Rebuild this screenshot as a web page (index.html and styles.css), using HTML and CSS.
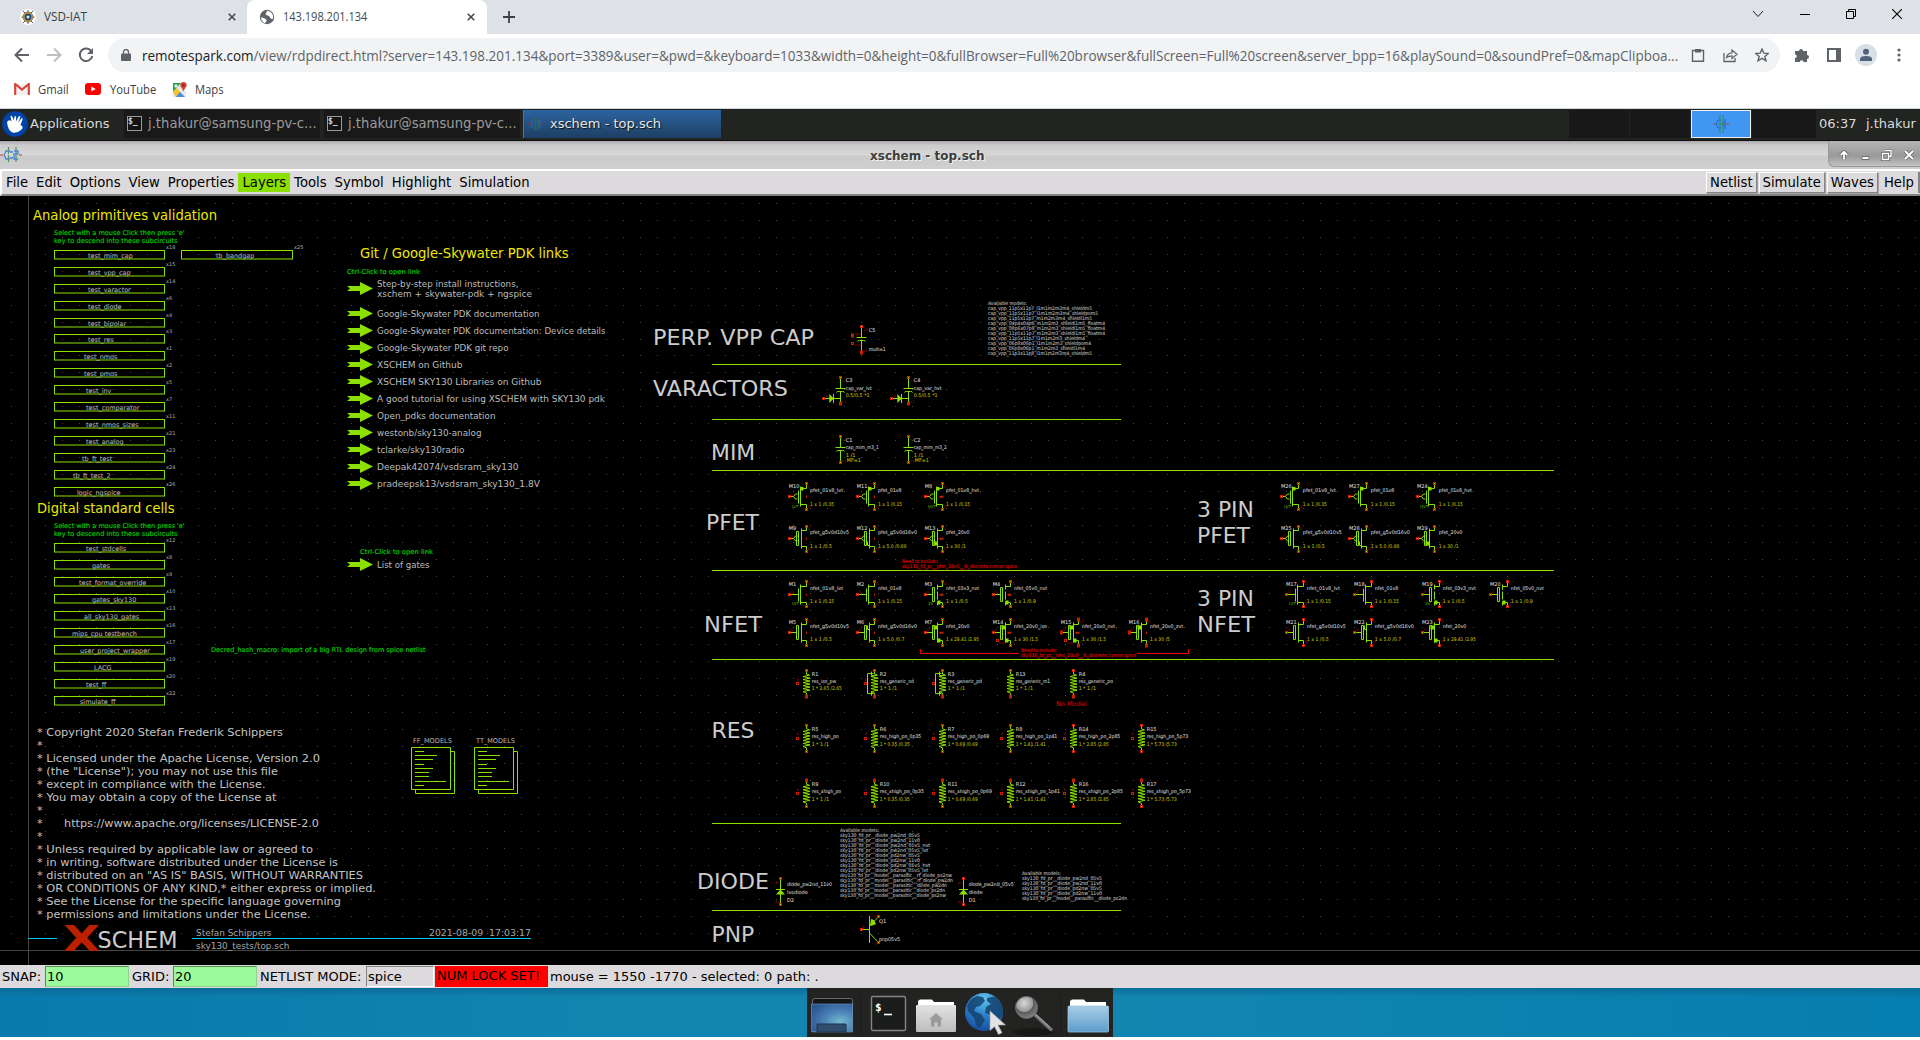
FILE: index.html
```html
<!DOCTYPE html>
<html lang="en">
<head>
<meta charset="utf-8">
<title>143.198.201.134</title>
<link rel="stylesheet" href="styles.css">
</head>
<body>
<header class="browser">
  <div class="tabstrip">
    <div class="tab">
      <svg class="fav" width="16" height="18" viewBox="0 0 16 18"><ellipse cx="8" cy="9" rx="8" ry="8" fill="#fff"/><path d="M3 3l3 3M13 3l-3 3M3 15l3-3M13 15l-3-3M1.500 9h3M11.500 9h3M8 2v3M8 13v3" stroke="#555"/><circle cx="8" cy="9" r="5" fill="#e39a2d" stroke="#666" stroke-width=".8"/><circle cx="8" cy="9" r="3.400" fill="#1b4e6b"/><circle cx="8" cy="9" r="1.500" fill="#d8e7ee"/></svg>
      <span class="tablabel"><span data-w="43">VSD-IAT</span></span>
      <svg class="x" width="8" height="8" viewBox="0 0 8 8"><path d="M.7.7l6.600 6.600M7.300.7L.7 7.300" stroke="#45494d" stroke-width="1.600"/></svg>
    </div>
    <div class="tab active">
      <svg class="fav" width="16" height="16" viewBox="0 0 16 16"><circle cx="8" cy="8" r="7.200" fill="#5f6368"/><path d="M2 8.500c2 0 3.500.6 5 2 1.200 1 .6 2-.4 2.400l-.3 1.300C3.500 13.400 2 11 2 8.500zM8 1.800c-.6 1.300-.2 2.300-1.400 2.800 0 1.200.6 1.700 2.200 2 1.800.4 2 2 3 3 .6.600 1.400.6 2.200-.2C14.800 5.500 12 2.200 8 1.800z" fill="#fff"/></svg>
      <span class="tablabel"><span data-w="84.500">143.198.201.134</span></span>
      <svg class="x" width="8" height="8" viewBox="0 0 8 8"><path d="M.7.7l6.600 6.600M7.300.7L.7 7.300" stroke="#45494d" stroke-width="1.600"/></svg>
    </div>
    <svg class="plus" width="12" height="12" viewBox="0 0 12 12"><path d="M6 0v12M0 6h12" stroke="#3c4043" stroke-width="1.800"/></svg>
    <div class="winbtns">
      <svg width="12" height="8" viewBox="0 0 12 8"><path d="M1 1l5 5.500L11 1" fill="none" stroke="#222"/></svg>
      <svg width="10" height="10" viewBox="0 0 10 10"><path d="M0 5.500h10" stroke="#000"/></svg>
      <svg width="10" height="10" viewBox="0 0 10 10"><path d="M.5 2.500h7v7h-7zM2.500 2.500v-2h7v7h-2" fill="none" stroke="#000"/></svg>
      <svg width="10" height="10" viewBox="0 0 10 10"><path d="M0 0l10 10M10 0L0 10" stroke="#000" stroke-width="1.100"/></svg>
    </div>
  </div>
  <div class="toolbar">
    <div class="nav">
      <svg width="16" height="16" viewBox="0 0 16 16"><path d="M15 8H2M8 1.500L1.500 8 8 14.500" fill="none" stroke="#5f6368" stroke-width="2"/></svg>
      <svg width="16" height="16" viewBox="0 0 16 16"><path d="M1 8h13M8 1.500L14.500 8 8 14.500" fill="none" stroke="#bcbec0" stroke-width="2"/></svg>
      <svg width="16" height="16" viewBox="0 0 16 16"><path d="M13.500 4.500A6.300 6.300 0 1 0 14.300 9" fill="none" stroke="#5f6368" stroke-width="2"/><path d="M15 1v6H9z" fill="#5f6368"/></svg>
    </div>
    <div class="omnibox">
      <svg width="10" height="12" viewBox="0 0 10 12"><path d="M1 4.500h8q1 0 1 1V11q0 1-1 1H1q-1 0-1-1V5.500q0-1 1-1z" fill="#5f6368"/><path d="M2.500 5V3a2.500 2.500 0 0 1 5 0v2" fill="none" stroke="#5f6368" stroke-width="1.300"/></svg>
      <span class="url"><span data-w="1536"><b>remotespark.com</b>/view/rdpdirect.html?server=143.198.201.134&amp;port=3389&amp;user=&amp;pwd=&amp;keyboard=1033&amp;width=0&amp;height=0&amp;fullBrowser=Full%20browser&amp;fullScreen=Full%20screen&amp;server_bpp=16&amp;playSound=0&amp;soundPref=0&amp;mapClipboa...</span></span>
      <svg width="14" height="14" viewBox="0 0 14 14"><path d="M1.500 2.500h11v10.800h-11z" fill="none" stroke="#5f6368" stroke-width="1.400"/><path d="M4 1h6v3.500H4z" fill="#5f6368"/></svg>
      <svg width="16" height="15" viewBox="0 0 16 15"><path d="M2 5v8.500h11V10" fill="none" stroke="#5f6368" stroke-width="1.300"/><path d="M4.500 9.500c.5-3 2.500-4.500 5.500-4.700V2l5 4.300-5 4.200V7.800c-2.500 0-4 .5-5.500 1.700z" fill="none" stroke="#5f6368" stroke-width="1.200"/></svg>
      <svg width="14" height="14" viewBox="0 0 14 14"><path d="M7 1l1.800 4.200 4.500.3-3.500 2.900 1.200 4.400L7 10.400l-4 2.400 1.200-4.400L.7 5.500l4.500-.3z" fill="none" stroke="#5f6368" stroke-width="1.400"/></svg>
    </div>
    <div class="ext">
      <svg width="16" height="16" viewBox="0 0 16 16"><path d="M1 4h4a2 2 0 1 1 4 0h4v4a2 2 0 1 1 0 4v3H9.500a1.800 1.800 0 0 0-3.600 0H1v-4a1.800 1.800 0 0 0 0-3.600z" fill="#5f6368"/></svg>
      <svg width="14" height="14" viewBox="0 0 14 14"><path d="M1 1h12v12H1z" fill="none" stroke="#5f6368" stroke-width="2"/><path d="M9 1h4v12H9z" fill="#5f6368"/></svg>
      <svg class="avatar" width="22" height="22" viewBox="0 0 22 22"><circle cx="11" cy="11" r="11" fill="#d9dfe6"/><circle cx="11" cy="7.800" r="3" fill="#51617a"/><path d="M5 17v-2q0-3 6-3t6 3v2z" fill="#51617a"/></svg>
      <svg width="4" height="14" viewBox="0 0 4 14"><g fill="#5f6368"><circle cx="2" cy="2" r="1.600"/><circle cx="2" cy="7" r="1.600"/><circle cx="2" cy="12" r="1.600"/></g></svg>
    </div>
  </div>
  <div class="bookmarks">
    <span class="bm gmail"><svg width="16" height="12" viewBox="0 0 16 12"><path d="M2.500 1h11v11h-11z" fill="#f1f1f1"/><path d="M1.200 12V1L8 6.500 14.800 1v11" fill="none" stroke="#d8443a" stroke-width="2.200"/></svg><span data-w="31">Gmail</span></span>
    <span class="bm yt"><svg width="16" height="12" viewBox="0 0 16 12"><rect width="16" height="12" rx="3" fill="#f00"/><path d="M6.300 3.500v5L10.700 6z" fill="#fff"/></svg><span data-w="46">YouTube</span></span>
    <span class="bm"><svg width="15" height="15" viewBox="0 0 15 15"><path d="M1 1h9v6l4 2v6H1z" fill="#e8e8e8"/><path d="M1 1h8L1 10z" fill="#2ba24c"/><path d="M1 10l4-4 7 9H4z" fill="#f6c52c"/><path d="M4 15l4-5 5 5z" fill="#4a8af4"/><circle cx="4" cy="4" r="1.700" fill="#d9f0df"/><path d="M11.500 0a3.200 3.200 0 0 1 3.200 3.200c0 2-2.200 3-3.200 6.300-1-3.300-3.200-4.300-3.200-6.300A3.200 3.200 0 0 1 11.500 0z" fill="#db4437"/><circle cx="11.500" cy="3.200" r="1.200" fill="#7b241d"/></svg><span data-w="29">Maps</span></span>
  </div>
</header>

<nav class="panel">
  <div class="apps">
    <svg width="26" height="26" viewBox="0 0 26 26"><circle cx="13" cy="13" r="12.800" fill="#0044aa"/><path d="M5 11q2-3 4.500-.5L8.500 5q2-1 3 4.500L12.800 5l1.400.5-.3 5L17 5l1.500.6-2.300 6.400 3.300-5 1.300.7L18.500 14q4 2 .5 5-4 3.500-8.500 2.500Q6 20 5 11z" fill="#fff"/></svg>
    <span>Applications</span>
  </div>
  <div class="task"><i class="term">$_</i><span>j.thakur@samsung-pv-c...</span></div>
  <div class="task"><i class="term">$_</i><span>j.thakur@samsung-pv-c...</span></div>
  <div class="task on"><svg width="16" height="16" viewBox="0 0 16 16"><path d="M0 8h3m10 0h3" stroke="#933"/><path d="M4 4v8M12 4v8" stroke="#2a63c5"/><path d="M7 2v12M10 2v12" stroke="#2c7a4a"/></svg><span>xschem - top.sch</span></div>
  <div class="workspaces"><i></i><i></i><i class="cur"><svg width="16" height="18" viewBox="0 0 16 18"><path d="M0 9h3m10 0h3" stroke="#a44"/><path d="M3 9l2-4h3m-5 4l2 4h3M12 4v4h-2m2 6v-4h-2" fill="none" stroke="#2461c9"/><path d="M7 0v18M10 0v18M5 9h8" stroke="#2f8a68"/></svg></i><i class="last"></i></div>
  <span class="clock">06:37</span><span class="user">j.thakur</span>
</nav>

<div class="titlebar">
  <svg class="appicon" width="22" height="16" viewBox="0 0 22 16"><path d="M0 8h3m16 0h3" stroke="#c33"/><path d="M4 8l2-4h4m-6 4l2 4h4M14 4h4v3h-4v5h4M10 5h3M10 11h3" fill="none" stroke="#4a7fe0" stroke-width="1.300"/><path d="M8.500 0v16M16 0v16" stroke="#48964a" stroke-width="1.200" stroke-dasharray="3 1"/></svg>
  <span class="wintitle"><span data-w="114">xschem - top.sch</span></span>
  <div class="wmbtns">
    <svg width="10" height="10" viewBox="0 0 10 10"><path d="M5 1.500v8M1.500 5L5 1.500 8.500 5" fill="none" stroke="#666" stroke-width="3.400"/><path d="M5 1.500v8M1.800 5L5 1.800 8.200 5" fill="none" stroke="#fff" stroke-width="1.800"/></svg>
    <svg width="9" height="10" viewBox="0 0 9 10"><path d="M1 6.500h7v3H1z" fill="#fff" stroke="#707070"/></svg>
    <svg width="11" height="12" viewBox="0 0 11 12"><path d="M4 1.500h6v6H8M1.500 4.500h6v6h-6z" fill="none" stroke="#666" stroke-width="3"/><path d="M4 1.500h6v6H8M1.500 4.500h6v6h-6z" fill="none" stroke="#fff" stroke-width="1.400"/></svg>
    <svg width="10" height="10" viewBox="0 0 10 10"><path d="M1 1l8 8M9 1L1 9" stroke="#666" stroke-width="3.600"/><path d="M1 1l8 8M9 1L1 9" stroke="#fff" stroke-width="2"/></svg>
  </div>
</div>

<div class="menubar">
  <span>File</span><span>Edit</span><span>Options</span><span>View</span><span>Properties</span><span class="hot">Layers</span><span>Tools</span><span>Symbol</span><span>Highlight</span><span>Simulation</span>
  <div class="menuright"><span class="raised">Netlist</span><span class="raised">Simulate</span><span class="raised">Waves</span><span>Help</span></div>
</div>

<svg id="schematic" class="schematic" width="1920" height="769" viewBox="0 196 1920 769"></svg>

<div class="status">
  <span>SNAP:</span><span class="entry green">10</span><span>GRID:</span><span class="entry green second">20</span><span>NETLIST MODE:</span><span class="entry">spice</span><span class="alarm">NUM LOCK SET!</span><span class="mouse">mouse = 1550 -1770 - selected: 0 path: .</span>
</div>

<footer class="desktop">
  <div class="dock">
    <svg width="306" height="49" viewBox="807 988 306 49">
      <defs>
        <radialGradient id="scr" cx=".7" cy=".65" r=".8"><stop offset="0" stop-color="#74bccc"/><stop offset=".5" stop-color="#4a80b6"/><stop offset="1" stop-color="#2d5690"/></radialGradient>
        <linearGradient id="grey" x2="0" y2="1"><stop offset="0" stop-color="#e2e2e2"/><stop offset="1" stop-color="#bdbdbd"/></linearGradient>
        <linearGradient id="blue" x2="0" y2="1"><stop offset="0" stop-color="#a9cde6"/><stop offset="1" stop-color="#5c9dcb"/></linearGradient>
        <radialGradient id="sea" cx=".5" cy=".15" r=".9"><stop offset="0" stop-color="#5fc5ee"/><stop offset=".5" stop-color="#2b7fcb"/><stop offset="1" stop-color="#12489e"/></radialGradient>
        <radialGradient id="lens" cx=".4" cy=".3" r=".7"><stop offset="0" stop-color="#d8d8d8"/><stop offset=".55" stop-color="#999"/><stop offset=".6" stop-color="#5c5c5c"/><stop offset="1" stop-color="#808080"/></radialGradient>
      </defs>
      <path d="M812.500 1032v-31q0-2.500 2-2.500h36q2 0 2 2.500v31z" fill="#141516" stroke="#67696a"/>
      <path d="M811.500 1004h41v27.500h-41z" fill="url(#scr)" stroke="#6d9fd0" stroke-opacity=".6"/>
      <path d="M817 1032v-8h29v8z" fill="#304e6c" stroke="#1c3550"/>
      <path d="M860.500 995v38M1060.500 995v38" stroke="#191a19"/>
      <rect x="871.500" y="996.500" width="34" height="34" rx="1.500" fill="#1b1d1c" stroke="#858585" stroke-width="1.400"/>
      <text x="875" y="1011" class="prompt">$</text><path d="M884 1014.500h8" stroke="#fff" stroke-width="1.600"/>
      <path d="M918 1009v-8l2-1.500h12l2 2.500h20v7z" fill="#fff"/><rect x="916" y="1005" width="40" height="27" rx="1" fill="url(#grey)"/>
      <path d="M936 1013l7 6.500h-2v7h-3.500v-4h-3v4H931v-7h-2z" fill="#9b9b9b"/>
      <circle cx="984" cy="1012" r="19" fill="url(#sea)"/>
      <path d="M967 1006q3-8 10-10l6 1 2 4-5 5-4 1-2 4 7 3 4 6-5 8-3-1-3-9-6-7zM987 998l9-2 6 9 1 9-5 8-5-1-2-6-6-2 1-6 5-3-4-3z" fill="#15436f" opacity=".85"/>
      <path d="M990 1011v19.500l4.500-4 4 8 3.500-1.800-4-7.700h7.500z" fill="#e2e2e2" stroke="#aaa" stroke-width=".6"/>
      <ellipse cx="1034" cy="1032" rx="20" ry="4" fill="#111" opacity=".6"/>
      <path d="M1034 1014l17 15.500" stroke="#737373" stroke-width="3.400" stroke-linecap="round"/><path d="M1035 1014l15 13.500" stroke="#b5b5b5" stroke-width="1"/>
      <circle cx="1026.500" cy="1007.500" r="11" fill="url(#lens)" stroke="#6c6c6c"/>
      <path d="M1070 1008v-7l2-1.500h12l2 2.500h20v7z" fill="#fff"/><rect x="1068" y="1006" width="40.500" height="26" rx="1" fill="url(#blue)" stroke="#9cc3de" stroke-width=".8"/>
    </svg>
  </div>
</footer>
<script src="app.js"></script>
</body>
</html>
```
FILE: styles.css
```css
* { box-sizing: border-box; }
body { margin: 0; width: 1920px; height: 1040px; overflow: hidden; background: #fff; font-family: "DejaVu Sans", sans-serif; font-size: 13px; }
svg { display: block; flex: none; }
[data-w] { display: inline-block; white-space: nowrap; transform-origin: 0 50%; }

.browser { height: 109px; font-family: "Open Sans", "Noto Sans", sans-serif; font-size: 12px; color: #3c4043; border-bottom: 1px solid #cfd6d9; }
.tabstrip { height: 34px; background: #dee1e6; display: flex; align-items: center; position: relative; }
.tab { width: 247px; height: 34px; display: flex; align-items: center; padding: 0 11px 0 20px; }
.tab.active { width: 240px; background: #fff; border-radius: 8px 8px 0 0; padding: 0 12px 0 12px; color: #45494d; }
.tablabel { margin-left: 8px; flex: 1; overflow: hidden; padding-bottom: 1px; }
.plus { margin-left: 16px; }
.winbtns { margin-left: auto; display: flex; align-items: center; gap: 36px; padding: 0 18px 6px 0; }
.toolbar { height: 42px; display: flex; align-items: center; }
.nav { width: 108px; display: flex; gap: 16px; padding-left: 14px; }
.omnibox { width: 1672px; height: 34px; border-radius: 17px; background: #f1f3f4; display: flex; align-items: center; padding: 0 11px 0 13px; font-size: 14px; color: #5f6368; }
.url { width: 1550px; margin-left: 11px; overflow: hidden; flex: none; margin-right: -1px; }
.url b { font-weight: 400; color: #202124; }
.omnibox svg + svg { margin-left: 17px; }
.ext { display: flex; align-items: center; gap: 17px; padding-left: 14px; }
.avatar { margin: 0 3px 0 -3px; }
.bookmarks { height: 26px; display: flex; align-items: center; padding-left: 14px; gap: 16px; }
.bm { display: flex; align-items: center; gap: 8px; }
.bm.yt { gap: 9px; }

.panel { height: 32px; background: #222421; border-bottom: 1px solid #0e0e0e; display: flex; align-items: center; color: #dadada; padding-bottom: 2px; }
.apps { width: 124px; display: flex; align-items: center; gap: 2px; padding-left: 2px; }
.task { width: 196px; height: 28px; margin-right: 4px; background: #191919; display: flex; align-items: center; gap: 6px; padding-left: 3px; color: #9b9b9b; white-space: nowrap; font-size: 13.200px; }
.task:nth-child(3) { margin-right: 3px; }
.task.on { width: 198px; background: linear-gradient(#2b64a0, #1e3f63); color: #e6e6e6; padding-left: 4px; text-shadow: 1px 1px 1px #111; border-left: 1px solid #3b7bbd; font-size: 13px; }
.term { width: 15px; height: 15px; border: 1px solid #9a9a9a; background: #141414; color: #ddd; font: bold 8px/9px "DejaVu Sans Mono", monospace; }
.workspaces { margin-left: auto; display: flex; gap: 1px; height: 28px; }
.workspaces i { width: 60px; background: #181818; }
.workspaces .last { width: 64px; }
.workspaces .cur { background: #4096f0; border: 1px solid #f2f2f2; display: flex; align-items: center; justify-content: center; }
.clock { width: 46px; padding-left: 3px; }
.user { width: 54px; margin-left: 4px; white-space: nowrap; }

.titlebar { height: 28px; background: linear-gradient(#aaa8aa 0, #cccacc 4px, #d8d8d8 14px, #cbcbcb 15px, #cfcfcf); display: flex; align-items: center; }
.appicon { margin-top: 0; }
.wintitle { margin-left: 848px; padding-top: 1px; flex: 1; font-weight: 700; font-size: 12px; color: #3b3d3e; text-shadow: 1px 1px 0 #f5f5f5; }
.wmbtns { width: 92px; height: 26px; margin-bottom: 2px; display: flex; align-items: center; justify-content: space-between; padding: 2px 6px 0 10px; border-radius: 0 0 0 6px; border: 1px solid #999; border-width: 0 0 1px 1px; background: linear-gradient(#b5b5b5, #999 60%, #c4c4c4); }
.menubar { height: 27px; background: #dcdadd; border-top: 2px solid #fff; border-left: 2px solid #fff; border-bottom: 2px solid #848284; display: flex; align-items: center; color: #000; font-size: 13.200px; }
.menubar span { padding: 0 4px; height: 19px; line-height: 19px; white-space: nowrap; }
.menubar .hot { background: #8be000; }
.menuright { margin-left: auto; display: flex; align-items: center; gap: 2px; padding-right: 0; border-right: 2px solid #848284; }
.menuright .raised { height: 21px; border: 1px solid; border-color: #fff #848284 #848284 #fff; box-shadow: 1px 1px #a5a3a5; padding: 0 3px; line-height: 20px; }

.schematic { background: #000; font-family: "DejaVu Sans", sans-serif; }
.schematic text { white-space: pre; fill: #bcbcbc; font-size: 8.650px; }
.schematic .h { font-size: 13.400px; fill: #eee800; }
.schematic .lic { font-size: 11.200px; fill: #c4c4c4; }
.schematic .big { font-size: 21.900px; fill: #ccc; }
.schematic .info { font-size: 8.850px; fill: #a6a6a6; }
.schematic .g { font-size: 6.500px; fill: #00cc00; stroke: #00cc00; stroke-width: .15px; }
.schematic .lab { font-size: 6.470px; fill: #a8a8a8; stroke: #a8a8a8; stroke-width: .12px; }
.schematic .mod { font-size: 6.600px; fill: #b8b8b8; }
.schematic .tiny { font-size: 5px; fill: #b0b0b0; }
.schematic .c { font-size: 5px; fill: #c4c4c4; stroke: #c4c4c4; stroke-width: .1px; }
.schematic .s { font-size: 5px; fill: #b0b000; stroke: #b0b000; stroke-width: .1px; }
.schematic .m { font-size: 4.900px; fill: #b0b0b0; stroke: #b0b0b0; stroke-width: .12px; }
.schematic .r { font-size: 5px; fill: #e80000; stroke: #e80000; stroke-width: .12px; }
.schematic .nm { font-size: 6.400px; fill: #e80000; }
.schematic .p { font-size: 3.400px; fill: #b80000; }
.schematic .v { font-size: 4px; fill: #5cb800; }
.schematic .logo { font-size: 35.600px; font-weight: 700; fill: #bd2000; }
.schematic .name { font-size: 22.300px; fill: #ccc; }
.schematic .w { fill: none; stroke: #8be000; stroke-width: 1; }
.schematic .f { fill: #8be000; }
.schematic .pin { fill: #8be000; stroke: #d01c00; stroke-width: 1; }
.schematic .pin.o { fill: #000; }
.schematic .pf { fill: #c42000; }
.schematic .axis { stroke: #444; fill: none; }
.schematic .dots { stroke: #484848; fill: none; stroke-dasharray: 1 16; }
.schematic .cy { stroke: #00c8f0; fill: none; }
.schematic .red { stroke: #f00000; fill: none; }

.status { height: 23px; background: #dcdadd; display: flex; align-items: center; color: #000; white-space: nowrap; padding-left: 2px; }
.status span { flex: none; }
.status span:nth-child(1) { width: 43px; }
.status span:nth-child(3) { width: 41px; }
.status span:nth-child(5) { width: 106px; }
.status .entry { width: 68px; height: 21px; line-height: 19px; border: 1px solid; border-color: #848284 #fff #fff #848284; padding-left: 1px; }
.status .green { width: 84px; background: #9bfb9b; border-color: #548a54 #8bd58b #8bd58b #548a54; margin-right: 3px; }
.status .alarm { width: 113px; height: 21px; line-height: 20px; background: #f00; padding-left: 2px; margin-left: 1px; }
.status .mouse { margin-left: 2px; }
.desktop { height: 49px; background: linear-gradient(#0a6c99, transparent 9px), linear-gradient(90deg, #087aac, #1184b0 30%, #1286b1 60%, #057dae); display: flex; }
.dock { width: 306px; margin-left: 807px; background: #232422; }
.prompt { font: bold 11px "DejaVu Sans Mono", monospace; fill: #fff; }
```
FILE: app.js
```js
// Squeeze or stretch labels to the width of their slot.
document.querySelectorAll('[data-w]').forEach(function (el) {
  var want = +el.dataset.w, have = el.offsetWidth;
  el.style.transform = 'scaleX(' + want / have + ')';
  el.style.marginRight = (want - have) + 'px';
});

var NS = 'http://www.w3.org/2000/svg';
var svg = document.getElementById('schematic');
function add(tag, attrs, text) {
  var e = document.createElementNS(NS, tag);
  for (var k in attrs) e.setAttribute(k, attrs[k]);
  if (text != null) e.textContent = text;
  svg.appendChild(e);
  return e;
}
function T(x, y, s, cls, len) {
  var a = { x: x, y: y };
  if (cls) a['class'] = cls;
  if (len) { a.textLength = len; a.lengthAdjust = 'spacingAndGlyphs'; }
  add('text', a, s);
}
function P(d, cls) { add('path', { d: d, 'class': cls || 'w' }); }
function px(v) { return Math.floor(v) + 0.5; }
function pin(x, y, kind) {
  x = px(x); y = px(y);
  if (kind === 'f') P('M' + (x - 1.5) + ' ' + (y - 2) + 'h3v4h-3z', 'pf');
  else add('rect', { x: x - 1, y: y - 1, width: 2, height: 2, 'class': kind === 'o' ? 'pin o' : 'pin' });
}
function lines(x, y, step, arr, cls, lens) { arr.forEach(function (s, i) { T(x, y + i * step, s, cls, lens && lens[i]); }); }

// grid and axes
var d = '';
for (var k = 1; k < 45; k++) d += 'M11 ' + px(950.3 - 16.98 * k) + 'H1920';
P(d, 'dots');
P('M28.5 196V965M0 950.5H1920', 'axis');

// sub-circuit boxes
function box(x, w, y, name, tx, inst) {
  add('rect', { x: x + .5, y: y + .5, width: w, height: 8.5, 'class': 'w' });
  T(tx, y + 8, name, 'lab');
  T(x + w + 2, y - 1, inst, 'tiny');
}
T(33, 220, 'Analog primitives validation', 'h', 184);
lines(54, 234.5, 8, ["Select with a mouse Click then press 'e'", 'key to descend into these subcircuits'], 'g', [130.6, 123.5]);
[['test_mim_cap', 88, 'x18'], ['test_vpp_cap', 88, 'x15'], ['test_varactor', 88, 'x14'], ['test_diode', 88, 'x6'], ['test_bipolar', 88, 'x4'],
 ['test_res', 88, 'x3'], ['test_nmos', 84, 'x1'], ['test_pmos', 84, 'x2'], ['test_inv', 86, 'x5'], ['test_comparator', 86, 'x7'],
 ['test_nmos_sizes', 86, 'x11'], ['test_analog', 86, 'x21'], ['tb_ft_test', 82, 'x23'], ['tb_ft_test_2', 73, 'x24'], ['logic_ngspice', 77, 'x26']
].forEach(function (b, i) { box(54, 110, Math.floor(250.2 + i * 16.95), b[0], b[1], b[2]); });
box(181, 111, 250, 'tb_bandgap', 216, 'x25');
T(37, 513, 'Digital standard cells', 'h', 137.5);
lines(54, 527.6, 8, ["Select with a mouse Click then press 'e'", 'key to descend into these subcircuits'], 'g', [130.6, 123.5]);
[['test_stdcells', 86, 'x12'], ['gates', 92, 'x8'], ['test_format_override', 79, 'x9'], ['gates_sky130', 92, 'x10'], ['all_sky130_gates', 84, 'x13'],
 ['mips_cpu testbench', 72, 'x16'], ['user_project_wrapper', 80, 'x17'], ['LACG', 94, 'x19'], ['test_ff', 86, 'x20'], ['simulate_ff', 80, 'x22']
].forEach(function (b, i) { box(54, 110, 543 + i * 17, b[0], b[1], b[2]); });
T(211, 652, 'Decred_hash_macro: import of a big RTL design from spice netlist', 'g', 214.7);

// links
function arrow(y) { y = px(y); P('M347 ' + (y - 2.5) + 'h13v-4l13 6.500-13 6.500v-4h-13l3-2.500z', 'f'); }
T(360, 258, 'Git / Google-Skywater PDK links', 'h', 208.6);
T(347, 273.5, 'Ctrl-Click to open link', 'g', 73);
arrow(288.3);
T(377, 287, 'Step-by-step install instructions,', '', 141.5);
T(377, 297, 'xschem + skywater-pdk + ngspice', '', 155);
['Google-Skywater PDK documentation', 'Google-Skywater PDK documentation: Device details', 'Google-Skywater PDK git repo', 'XSCHEM on Github',
 'XSCHEM SKY130 Libraries on Github', 'A good tutorial for using XSCHEM with SKY130 pdk', 'Open_pdks documentation', 'westonb/sky130-analog',
 'tclarke/sky130radio', 'Deepak42074/vsdsram_sky130', 'pradeepsk13/vsdsram_sky130_1.8V'
].forEach(function (s, i) { var y = 313.8 + i * 17; arrow(y); T(377, y + 3.2, s, '', [162.5, 228.5, 131.5, 85.5, 164.5, 228, 118.5, 104.5, 87.5, 141.5, 163][i]); });
T(360, 553.5, 'Ctrl-Click to open link', 'g', 73);
arrow(564.7);
T(377, 568, 'List of gates', '', 52.5);

// licence
['* Copyright 2020 Stefan Frederik Schippers', '*', '* Licensed under the Apache License, Version 2.0', '* (the "License"); you may not use this file',
 '* except in compliance with the License.', '* You may obtain a copy of the License at', '*', '*      https://www.apache.org/licenses/LICENSE-2.0', '*',
 '* Unless required by applicable law or agreed to', '* in writing, software distributed under the License is', '* distributed on an "AS IS" BASIS, WITHOUT WARRANTIES',
 '* OR CONDITIONS OF ANY KIND,* either express or implied.', '* See the License for the specific language governing', '* permissions and limitations under the License.'
].forEach(function (s, i) { T(37, 736 + i * 13, s, 'lic', [246, 0, 283, 241, 228.5, 239.5, 0, 282, 0, 276, 301, 326, 339, 304, 273.5][i]); });

// model lists
[[411, 'FF_MODELS', 413], [474, 'TT_MODELS', 476]].forEach(function (m) {
  var x = m[0];
  T(m[2], 742.7, m[1], 'mod', 39);
  P('M' + (x + .5) + ' 747.500h39v42h-39zM' + (x + 39.5) + ' 751.500h4v42h-39v-4');
  var p = '';
  [[751, 9], [755, 22], [759, 18], [764, 9], [768, 18], [772, 14], [776, 14], [781, 31], [785, 9]].forEach(function (l) { p += 'M' + (x + 4) + ' ' + (l[0] + .5) + 'h' + l[1]; });
  P(p);
});

// title block
P('M28 938.500H57M192 938.500H531', 'cy');
T(63, 951, 'X', 'logo', 37);
T(97.5, 948, 'SCHEM', 'name', 80);
T(196, 935.7, 'Stefan Schippers', 'info', 75.5);
T(429, 935.7, '2021-08-09  17:03:17', 'info', 102);
T(196, 949, 'sky130_tests/top.sch', 'info', 93.5);

// section rules and headings
P('M712 364.500H1121M712 419.500H1121M712 470.500H1554M712 570.500H1554M712 659.500H1554M712 823.500H1121M712 910.500H1121');
[[653, 344.7, 'PERP. VPP CAP', 161], [653, 395.5, 'VARACTORS', 135], [711, 460, 'MIM'], [706, 530, 'PFET'], [704, 632, 'NFET', 58], [711.5, 737.7, 'RES'],
 [697, 889, 'DIODE', 72], [711.5, 942, 'PNP'], [1197, 517, '3 PIN'], [1197, 543, 'PFET'], [1197, 606, '3 PIN'], [1197, 632, 'NFET', 58]
].forEach(function (b) { T(b[0], b[1], b[2], 'big', b[3]); });

// capacitors
function cap(x, y1, y2, yp, f2) {
  var X = px(x);
  P('M' + X + ' ' + y1 + 'V' + yp + 'M' + (X - 5) + ' ' + px(yp) + 'h10M' + (X - 4) + ' ' + (px(yp) + 4) + 'q0-1 2-1h4q2 0 2 1M' + X + ' ' + (px(yp) + 3) + 'V' + y2);
  pin(x, y1); pin(x, y2, f2);
  T(x + 2, y1 + 5, 'c0', 'p'); T(x + 2, y2, 'c1', 'p');
}
cap(861.3, 326.3, 352, 337, 'f');
pin(852.3, 335, 'f'); pin(852.3, 343.7, 'o'); T(855, 335, 'top', 'p'); T(855, 346, 'sub', 'p');
T(868.7, 331.7, 'C5', 'c'); T(868.7, 350.7, 'mult=1', 'c', 17);
[[840.3, 'C3', 'cap_var_lvt', 26], [908.3, 'C4', 'cap_var_hvt', 28]].forEach(function (c) {
  var x = c[0];
  cap(x, 377.3, 403, 388, 'f');
  P('M' + (x - 16) + ' 398.500h16M' + (x - 6.8) + ' 394v9');
  P('M' + (x - 11) + ' 394v9l4.500-4.500z', 'f');
  pin(x - 17, 398.3); T(x - 15, 397, 'b', 'p');
  T(x + 5.4, 381.7, c[1], 'c'); T(x + 5.4, 390, c[2], 'c', c[3]); T(x + 5.4, 396.9, '0.5/0.5 *1', 's', 24);
});
[[840.3, 'C1', 'cap_mim_m3_1'], [908.3, 'C2', 'cap_mim_m3_2']].forEach(function (c) {
  var x = c[0];
  cap(x, 436.3, 462.3, 447);
  T(x + 5.4, 441.7, c[1], 'c'); T(x + 5.4, 449, c[2], 'c', 33); T(x + 5.4, 456.7, '1 /1', 's'); T(x + 6.5, 461.9, 'MF=1', 's', 14);
});
lines(988, 305, 5, ['Available models:', 'cap_vpp_11p5x11p7_l1m1m2m3m4_shieldm5', 'cap_vpp_11p5x11p7_l1m1m2m3m4_shieldpom5', 'cap_vpp_11p5x11p7_m1m2m3m4_shieldl1m5',
  'cap_vpp_04p4x04p6_m1m2m3_shieldl1m5_floatm4', 'cap_vpp_08p6x07p8_m1m2m3_shieldl1m5_floatm4', 'cap_vpp_11p5x11p7_m1m2m3_shieldl1m5_floatm4',
  'cap_vpp_11p5x11p7_l1m1m2m3_shieldm4', 'cap_vpp_06p8x06p1_l1m1m2m3_shieldpom4', 'cap_vpp_06p8x06p1_m1m2m3_shieldl1m4', 'cap_vpp_11p3x11p8_l1m1m2m3m4_shieldm5'], 'm',
  [39, 104, 110, 104, 117, 117, 117, 97, 103, 97, 104]);

// transistors: p (p-channel), b (body pin: 1 short, 2 wide), hv/hv2/hv3 (gate style), vt (threshold tag), solid pins, sub pin
function fet(x, y, name, model, size, o) {
  var X = px(x), Y = px(y), t = o.t || 13, b = o.bt || 13;
  var ch = X + (o.hv ? 12 : 11), dr = X + 17;
  if (o.p) P('M' + X + ' ' + Y + 'h4l2-2.500h2M' + (X + 4) + ' ' + Y + 'l2 2.500h2');
  else P('M' + X + ' ' + Y + 'h' + (o.hv ? 7 : 9));
  if (o.hv) P('M' + (X + 7) + ' ' + (Y - 7) + 'h2v14h-2z'); else P('M' + (X + 9) + ' ' + (Y - 6) + 'v13');
  P(o.nat ? 'M' + ch + ' ' + (Y - 10) + 'v5m0 2v8m0 2v4' : 'M' + ch + ' ' + (Y - 10) + 'v20');
  P('M' + ch + ' ' + (Y - 8) + 'H' + dr + 'V' + (Y - t) + 'M' + ch + ' ' + (Y + 8) + 'H' + dr + 'V' + (Y + b));
  if (o.p && !o.hv) P('M' + ch + ' ' + (Y - 9.5) + 'h3v3.500h-3z', 'f');
  if (o.tail) P('M' + (dr - 5) + ' ' + (Y + 6) + 'h3v4h-3z', 'f');
  if (o.hv2) P('M' + (X + 10) + ' ' + (o.p ? Y + 3 : Y - 7) + 'v4h2');
  if (o.hv3) P('M' + (X + 8) + ' ' + (o.p ? Y + 3 : Y - 7) + 'h4v4h-4z', 'f');
  var k = o.solid ? 'f' : '';
  pin(x, y, o.solidGate ? 'f' : ''); pin(x + 17, y - t, k); pin(x + 17, y + b, k);
  if (o.b === 1) P('M' + (dr - .5) + ' ' + (Y - 1) + 'h1v2.500h-1z', 'pf');
  if (o.b === 2) P('M' + (dr - 3) + ' ' + (Y - .8) + 'h4v-1v3h-4z', 'pf');
  T(x + 1, y - 1, 'G', 'p'); T(x + 18.5, y - 9, o.p ? 'S' : 'D', 'p'); T(x + 18.5, y + 11, o.p ? 'D' : 'S', 'p');
  if (o.vt) T(x + 2.5, y + 11, o.vt, 'v');
  if (o.sub) { pin(x + 4, y + 8.5, 'o'); T(x + 5, y + 12, 'sub', 'p'); }
  T(x - .6, y - 8.7, name, 'c'); T(x + o.dx, y - 4.5, model, 'c', model.length > 13 ? 39 : model.length * 2.62 - (model.length > 9 ? 1 : 0)); T(x + o.dx, y + 9, size, 's', size.length * 2.2);
}
function mix(a, b) { var r = {}, k; for (k in a) r[k] = a[k]; for (k in b) r[k] = b[k]; return r; }
[[789.3, 1, ['M10', 'M11', 'M8', 'M9', 'M12', 'M13'], 20.7], [1281.5, 0, ['M26', 'M27', 'M24', 'M25', 'M28', 'M29'], 21.3]].forEach(function (g) {
  var x = g[0], body = g[1], n = g[2], o = { p: 1, dx: g[3], b: body };
  fet(x, 496.5, n[0], 'pfet_01v8_lvt', '1 x 1 /0.35', mix(o, { vt: 'LVT' }));
  fet(x + 68, 496.5, n[1], 'pfet_01v8', '1 x 1 /0.15', o);
  fet(x + 136, 496.5, n[2], 'pfet_01v8_hvt', '1 x 1 /0.15', mix(o, { vt: 'HVT', b: body * 2 }));
  o = mix(o, { hv: 1, t: 12 });
  fet(x, 538.5, n[3], 'pfet_g5v0d10v5', '1 x 1 /0.5', o);
  fet(x + 68, 538.5, n[4], 'pfet_g5v0d16v0', '1 x 5.0 /0.66', mix(o, { hv2: 1 }));
  fet(x + 136, 538.5, n[5], 'pfet_20v0', '1 x 30 /1', mix(o, { hv3: 1, b: body * 2 }));
});
[[789.4, 1, ['M1', 'M2', 'M3', 'M4', 'M5', 'M6', 'M7'], 20.6], [1286.5, 0, ['M17', 'M18', 'M19', 'M20', 'M21', 'M22', 'M23'], 20.3]].forEach(function (g) {
  var x = g[0], body = g[1], n = g[2], o = { dx: g[3], b: body, t: 13, bt: 12 };
  fet(x, 594.4, n[0], 'nfet_01v8_lvt', '1 x 1 /0.15', mix(o, { vt: 'LVT' }));
  fet(x + 68, 594.4, n[1], 'nfet_01v8', '1 x 1 /0.15', o);
  fet(x + 136, 594.4, n[2], 'nfet_03v3_nvt', '1 x 1 /0.5', mix(o, { hv: 1, vt: '3V', nat: 1, tail: 1, b: body * 2 }));
  fet(x + 204, 594.4, n[3], 'nfet_05v0_nvt', '1 x 1 /0.9', mix(o, { hv: 1, nat: 1, tail: 1, b: body * 2 }));
  o = mix(o, { hv: 1, bt: 13 });
  fet(x, 632.4, n[4], 'nfet_g5v0d10v5', '1 x 1 /0.5', o);
  fet(x + 68, 632.4, n[5], 'nfet_g5v0d16v0', '1 x 5.0 /0.7', mix(o, { hv2: 1 }));
  fet(x + 136, 632.4, n[6], 'nfet_20v0', '1 x 29.41 /2.95', mix(o, { hv3: 1, tail: 1, b: body * 2 }));
  if (body) {
    o = mix(o, { hv3: 1, b: 2 });
    fet(x + 204, 632.4, 'M14', 'nfet_20v0_iso', '1 x 30 /1.5', mix(o, { tail: 1, sub: 1 }));
    fet(x + 272, 632.4, 'M15', 'nfet_20v0_nvt', '1 x 30 /1.5', mix(o, { tail: 1, sub: 1, solid: 1, solidGate: 1 }));
    fet(x + 340, 632.4, 'M16', 'nfet_20v0_zvt', '1 x 30 /5', mix(o, { b: 1, solid: 1, solidGate: 1 }));
  }
});
T(902, 562.7, 'Need to include:', 'r', 36);
T(902, 567.7, 'sky130_fd_pr__pfet_20v0__tt_discrete.corner.spice', 'r', 115);
P('M920.500 649V653.500H1019M1137 653.500H1188.500V649', 'red');
T(1021, 651.7, 'Need to include:', 'r', 36);
T(1021, 656.7, 'sky130_fd_pr__nfet_20v0__tt_discrete.corner.spice', 'r', 115);

// resistors
function res(x, y, y2, name, model, size, dy, body, f1, f2) {
  var X = px(x), p = 'M' + X + ' ' + y + 'V' + (y + 3.5), i;
  for (i = 0; i < 6; i++) p += 'L' + (X + (i ? 3.5 : 3)) + ' ' + (y + 4.5 + i * 3) + 'L' + (X - 3.5) + ' ' + (y + 6 + i * 3);
  P(p + 'L' + X + ' ' + (y + 22.5) + 'V' + y2);
  if (body) { pin(x - 9.3, y + 12.7, 'o'); T(x - 10, y + 10, 'B', 'p'); }
  if (body === 2) P('M' + (X - 1) + ' ' + (y + 3) + 'h-6v20h6M' + (X - 3) + ' ' + (y + 1) + 'v4h3M' + (X - 3) + ' ' + (y + 21) + 'v4');
  pin(x, y, f1); pin(x, y2, f2);
  T(x + 5.2, y + 5.3, name, 'c'); T(x + 5.2, y + 12.6, model, 'c', model.length * (model.length > 14 ? 2.6 : 2.45)); T(x + 5.2, y + dy, size, 's', size.length * 2.15);
}
var rx = [806.5, 874.5, 942.5, 1010.5, 1073.5, 1141.5];
[['R1', 'res_iso_pw', '1 * 2.65 /2.65', 1], ['R2', 'res_generic_nd', '1 * 1 /1', 2], ['R3', 'res_generic_pd', '1 * 1 /1', 2], ['R13', 'res_generic_m1', '1 * 1 /1', 0], ['R4', 'res_generic_po', '1 * 1 /1', 0]
].forEach(function (r, i) { res(rx[i], 670.6, 696, r[0], r[1], r[2], 19.3, r[3], '', 'f'); });
var sz = ['1 * 1 /1', '1 * 0.35 /0.35', '1 * 0.69 /0.69', '1 * 1.41 /1.41', '1 * 2.85 /2.85', '1 * 5.73 /5.73'];
var sf = ['', '_0p35', '_0p69', '_1p41', '_2p85', '_5p73'];
['R5', 'R6', 'R7', 'R8', 'R14', 'R15'].forEach(function (n, i) { res(rx[i], 725.4, 751.3, n, 'res_high_po' + sf[i], sz[i], 20.4, 1); });
['R9', 'R10', 'R11', 'R12', 'R16', 'R17'].forEach(function (n, i) { res(rx[i], 780.8, 806.4, n, 'res_xhigh_po' + sf[i], sz[i], 20, 1, 'f'); });
T(1056, 706.3, 'No Model', 'nm', 30.5);

// diodes
[[780.4, 787, 'D2', 'diode_pw2nd_11v0', 'lvsdiode'], [963.2, 968.7, 'D1', 'diode_pw2nd_05v5', 'diode']].forEach(function (v) {
  var X = px(v[0]);
  P('M' + X + ' 878V904M' + (X - 4.5) + ' 889.500h9');
  P('M' + X + ' 889.500l4.500 5h-9z', 'f');
  pin(v[0], 878.4); pin(v[0], 904.4); T(X - 6, 884, 'd1', 'p'); T(X - 6, 903, 'd0', 'p');
  T(v[1], 885.7, v[3], 'c', 45); T(v[1], 893.9, v[4], 'c'); T(v[1], 902.2, v[2], 'c');
});
var s = 'sky130_fd_pr__';
lines(840, 832, 5, ['Available models:', s + 'diode_pw2nd_05v5', s + 'diode_pw2nd_11v0', s + 'diode_pw2nd_05v5_nvt', s + 'diode_pw2nd_05v5_lvt', s + 'diode_pd2nw_05v5', s + 'diode_pd2nw_11v0',
  s + 'diode_pd2nw_05v5_hvt', s + 'diode_pd2nw_05v5_lvt', s + 'model__parasitic__rf_diode_ps2nw', s + 'model__parasitic__rf_diode_pw2dn', s + 'model__parasitic__diode_pw2dn',
  s + 'model__parasitic__diode_ps2dn', s + 'model__parasitic__diode_ps2nw'], 'm', [39, 80, 80, 90, 88, 80, 80, 90, 88, 112, 113, 107, 105, 106]);
lines(1022, 875, 5, ['Available models:', s + 'diode_pw2nd_05v5', s + 'diode_pw2nd_11v0', s + 'diode_pd2nw_05v5', s + 'diode_pd2nw_11v0', s + 'model__parasitic__diode_ps2dn'], 'm', [39, 80, 80, 80, 80, 105]);

// pnp
P('M861 929.500H869M869.500 916V943M869.500 926L878.500 917M869.500 933L878.500 942.500');
P('M870 926l1-7 3 1 2 4-2 1z', 'f');
pin(861.4, 929.3); pin(878.5, 916.6); pin(878.5, 942.4);
T(874, 918, 'E', 'p'); T(874, 944.5, 'C', 'p'); T(862, 928, 'B', 'p');
T(879, 923, 'Q1', 'c'); T(879, 940.8, 'pnp05v5', 'c', 21);
```
